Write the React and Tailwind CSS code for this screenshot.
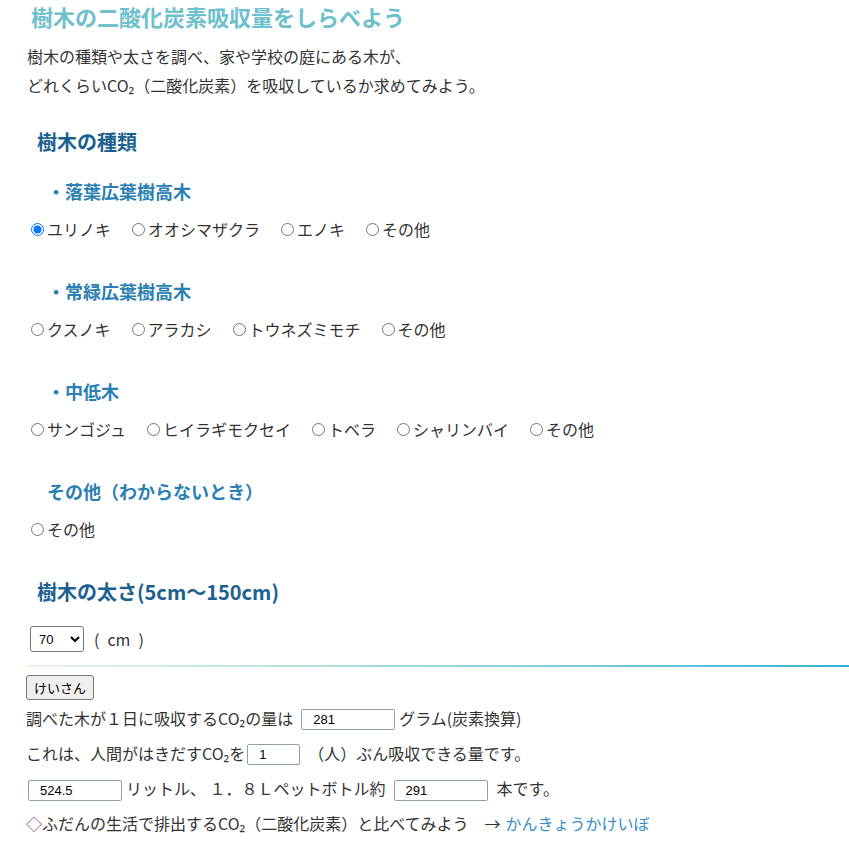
import React, { useState } from 'react';

const groups = [
  { title: '・落葉広葉樹高木', items: ['ユリノキ', 'オオシマザクラ', 'エノキ', 'その他'] },
  { title: '・常緑広葉樹高木', items: ['クスノキ', 'アラカシ', 'トウネズミモチ', 'その他'] },
  { title: '・中低木', items: ['サンゴジュ', 'ヒイラギモクセイ', 'トベラ', 'シャリンバイ', 'その他'] },
  { title: 'その他（わからないとき）', items: ['その他'] },
];

const sizes = [];
for (let s = 5; s <= 150; s += 5) sizes.push(s);

function NumBox({ value, width }) {
  return (
    <input
      type="text"
      readOnly
      value={value}
      className={`h-[21px] ${width} border border-[#8f9fac] rounded-[2px] pl-[11px] text-[13px] text-black font-['Liberation_Sans',Arial,sans-serif] bg-white`}
    />
  );
}

export default function App() {
  const [tree, setTree] = useState('0-0');
  const [size, setSize] = useState(70);

  return (
    <div className="min-h-screen bg-white text-[#333333] text-[16px] font-['Noto_Sans_CJK_JP','Noto_Sans',sans-serif] pl-[26px]">
      <h1 className="pl-[5px] text-[22px] leading-[33px] font-bold text-[#6ec0cd]">
        樹木の二酸化炭素吸収量をしらべよう
      </h1>
      <p className="mt-[9px] pl-[1px] leading-[29px]">
        樹木の種類や太さを調べ、家や学校の庭にある木が、
        <br />
        どれくらいCO₂（二酸化炭素）を吸収しているか求めてみよう。
      </p>

      <h2 className="mt-[27px] pl-[11px] text-[20px] leading-[30px] font-bold text-[#1b6190]">樹木の種類</h2>

      <div className="mt-[20px] flex flex-col gap-[35px]">
        {groups.map((g, gi) => (
          <div key={gi}>
            <h3 className="pl-[21px] text-[18px] leading-[28px] font-bold text-[#2a80b2]">{g.title}</h3>
            <div className="mt-[12px] h-[25px] flex items-center">
              {g.items.map((name, ii) => {
                const id = `${gi}-${ii}`;
                return (
                  <label key={id} className="flex items-center mr-[16px] leading-[25px]">
                    <input
                      type="radio"
                      name="tree"
                      checked={tree === id}
                      onChange={() => setTree(id)}
                      className="ml-[5px] mr-[3px] w-[13px] h-[13px]"
                    />
                    {name}
                  </label>
                );
              })}
            </div>
          </div>
        ))}
      </div>

      <h2 className="mt-[35px] pl-[11px] text-[20px] leading-[30px] font-bold text-[#1b6190]">樹木の太さ(5cm〜150cm)</h2>

      <div className="mt-[19px] h-[26px] flex items-center">
        <select
          value={size}
          onChange={(e) => setSize(Number(e.target.value))}
          className="ml-[4px] h-[26px] w-[54px] border border-[#767676] rounded-[3px] pl-[4px] text-[13px] text-black bg-white font-['Liberation_Sans',Arial,sans-serif]"
        >
          {sizes.map((s) => (
            <option key={s} value={s}>{s}</option>
          ))}
        </select>
        <span className="ml-[10px]">(</span>
        <span className="ml-[8px]">cm</span>
        <span className="ml-[8px]">)</span>
      </div>

      <div className="mt-[13px] h-[2px] bg-gradient-to-r from-[#e8f6e2] to-[#29b4d3]" />

      <button className="mt-[8px] h-[25px] px-[7px] border border-[#767676] rounded-[3px] bg-[#efefef] text-[13px] text-black leading-none">
        けいさん
      </button>

      <div className="h-[35px] flex items-center">
        <span>調べた木が１日に吸収するCO₂の量は</span>
        <span className="ml-[8px]"><NumBox value="281" width="w-[94px]" /></span>
        <span className="ml-[4px]">グラム(炭素換算)</span>
      </div>
      <div className="h-[35px] flex items-center">
        <span>これは、人間がはきだすCO₂を</span>
        <span className="ml-[2px]"><NumBox value="1" width="w-[53px]" /></span>
        <span className="ml-[8px]">（人）ぶん吸収できる量です。</span>
      </div>
      <div className="h-[36px] flex items-center">
        <span className="ml-[2px]"><NumBox value="524.5" width="w-[94px]" /></span>
        <span className="ml-[4px]">リットル、 １．８Ｌペットボトル約</span>
        <span className="ml-[8px]"><NumBox value="291" width="w-[94px]" /></span>
        <span className="ml-[9px]">本です。</span>
      </div>
      <div className="h-[34px] flex items-center">
        <span className="text-[#9b2d9b]">◇</span>
        <span>ふだんの生活で排出するCO₂（二酸化炭素）と比べてみよう　→ </span>
        <a href="#" className="ml-[5px] text-[#3b8ec4]">かんきょうかけいぼ</a>
      </div>
    </div>
  );
}
